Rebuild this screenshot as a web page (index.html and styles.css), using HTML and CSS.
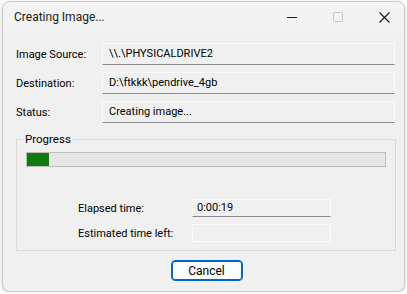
FILE: index.html
```html
<!DOCTYPE html>
<html lang="en">
<head>
    <meta charset="UTF-8">
    <title>Creating Image...</title>
    <link rel="stylesheet" href="styles.css">
</head>
<body>
    <div class="window">
        <div class="titlebar">
            <span class="title">Creating Image...</span>
            <div class="controls">
                <span class="ctl">
                    <svg width="10" height="10" viewBox="0 0 10 10"><path d="M0 5.5h10" stroke="#1a1a1a" stroke-width="1"/></svg>
                </span>
                <span class="ctl">
                    <svg width="10" height="10" viewBox="0 0 10 10"><rect x="0.5" y="0.5" width="9" height="9" rx="1" fill="none" stroke="#c4c4c4" stroke-width="1"/></svg>
                </span>
                <span class="ctl">
                    <svg width="11" height="11" viewBox="0 0 11 11"><path d="M0.5 0.5l10 10M10.5 0.5l-10 10" stroke="#1a1a1a" stroke-width="1.1"/></svg>
                </span>
            </div>
        </div>

        <div class="client">
            <div class="info">
                <label>Image Source:</label>
                <div class="field">\\.\PHYSICALDRIVE2</div>
                <label>Destination:</label>
                <div class="field">D:\ftkkk\pendrive_4gb</div>
                <label>Status:</label>
                <div class="field">Creating image...</div>
            </div>

            <fieldset class="group">
                <legend>Progress</legend>
                <div class="bar"><div class="fill" style="width: 22px"></div></div>
                <div class="times">
                    <label>Elapsed time:</label>
                    <div class="field small">0:00:19</div>
                    <label>Estimated time left:</label>
                    <div class="field small off"></div>
                </div>
            </fieldset>

            <div class="actions">
                <button>Cancel</button>
            </div>
        </div>
    </div>
</body>
</html>
```

FILE: styles.css
```css
body {
    margin: 0;
    background: #fafafa;
    font-family: Roboto, "Noto Sans", sans-serif;
    font-size: 11px;
    color: #000;
}
.window {
    margin: 1px 0 0 2px;
    width: 401px;
    height: 289px;
    border: 1px solid #c9c9c9;
    border-radius: 8px;
    background: #f0f0f0;
    overflow: hidden;
    box-shadow: 0 1px 3px rgba(0, 0, 0, 0.15);
}
.titlebar {
    height: 30px;
    background: #f3f3f3;
    display: flex;
    align-items: center;
}
.title {
    padding-left: 11px;
    flex: 1;
    font-size: 12px;
    color: #1a1a1a;
}
.controls { display: flex; height: 100%; margin-right: -3px; }
.ctl {
    width: 46px;
    display: flex;
    align-items: center;
    justify-content: center;
}
.client { padding: 11px 8px 0 13px; }
.info {
    display: grid;
    grid-template-columns: 86px 293px;
    row-gap: 7px;
    align-items: center;
}
.field {
    height: 20px;
    line-height: 20px;
    padding-left: 6px;
    background: #f0f0f0;
    border: 1px solid #fbfbfb;
    border-bottom-color: #8a8a8a;
    white-space: pre;
}
.group {
    box-sizing: border-box;
    margin: 9px 0 0 0;
    width: 380px;
    padding: 6px 9px 8px 9px;
    border: 1px solid #dadada;
}
.group legend {
    padding: 0 2px 0 1px;
    margin-left: -2px;
    line-height: 14px;
    font-size: 11.5px;
}
.bar {
    height: 13px;
    border: 1px solid #bcbcbc;
    background: #e6e6e6;
}
.fill { height: 100%; background: #107c10; }
.times {
    margin-top: 32px;
    display: grid;
    grid-template-columns: 114px 139px;
    row-gap: 7px;
    padding-left: 52px;
    align-items: center;
}
.field.small {
    height: 16px;
    line-height: 16px;
    padding-left: 4px;
}
.field.off { border-bottom-color: #fbfbfb; }
.actions {
    display: flex;
    justify-content: center;
    padding: 9px 0 0 1px;
}
button {
    width: 72px;
    height: 21px;
    font: inherit;
    font-size: 12px;
    background: #fdfdfd;
    border: 1px solid #0067c0;
    box-shadow: inset 0 0 0 1px #0067c0;
    border-radius: 4px;
    padding: 0;
}
```
